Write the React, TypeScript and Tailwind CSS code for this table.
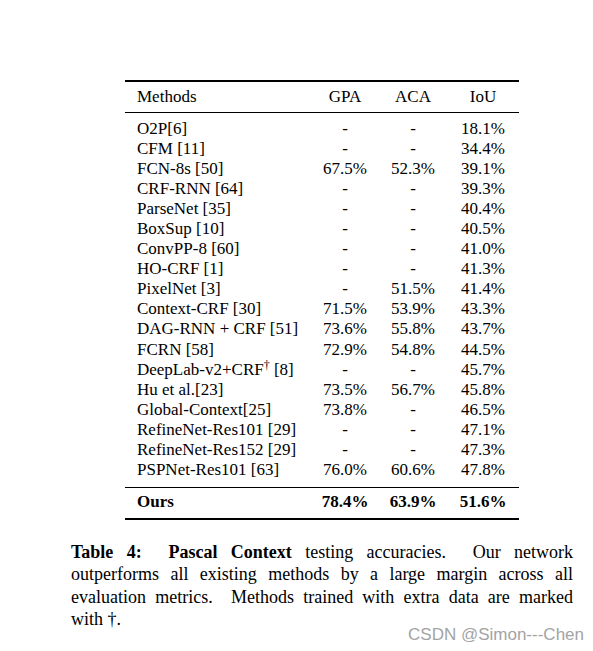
const rows: [string, string, string, string][] = [
  ['O2P[6]', '-', '-', '18.1%'],
  ['CFM [11]', '-', '-', '34.4%'],
  ['FCN-8s [50]', '67.5%', '52.3%', '39.1%'],
  ['CRF-RNN [64]', '-', '-', '39.3%'],
  ['ParseNet [35]', '-', '-', '40.4%'],
  ['BoxSup [10]', '-', '-', '40.5%'],
  ['ConvPP-8 [60]', '-', '-', '41.0%'],
  ['HO-CRF [1]', '-', '-', '41.3%'],
  ['PixelNet [3]', '-', '51.5%', '41.4%'],
  ['Context-CRF [30]', '71.5%', '53.9%', '43.3%'],
  ['DAG-RNN + CRF [51]', '73.6%', '55.8%', '43.7%'],
  ['FCRN [58]', '72.9%', '54.8%', '44.5%'],
  ['DEEPLAB', '-', '-', '45.7%'],
  ['Hu et al.[23]', '73.5%', '56.7%', '45.8%'],
  ['Global-Context[25]', '73.8%', '-', '46.5%'],
  ['RefineNet-Res101 [29]', '-', '-', '47.1%'],
  ['RefineNet-Res152 [29]', '-', '-', '47.3%'],
  ['PSPNet-Res101 [63]', '76.0%', '60.6%', '47.8%'],
];

const grid = 'grid grid-cols-[174px_68px_68px_1fr] pl-[12px]';

function Row({ cells, bold }: { cells: [string, string, string, string]; bold?: boolean }) {
  const [name, gpa, aca, iou] = cells;
  return (
    <div className={`${grid} leading-[20.1px] ${bold ? 'font-bold' : ''}`}>
      <div>
        {name === 'DEEPLAB' ? (
          <>
            DeepLab-v2+CRF<span className="relative -top-[6px] text-[12px] leading-none">†</span> [8]
          </>
        ) : (
          name
        )}
      </div>
      <div className="text-center">{gpa}</div>
      <div className="text-center">{aca}</div>
      <div className="text-center">{iou}</div>
    </div>
  );
}

export default function App() {
  return (
    <div className="relative w-[593px] h-[651px] bg-white text-black font-['Liberation_Serif',serif] pt-[80px]">
      <div className="ml-[125px] w-[394px] text-[17px]">
        <div className="h-[2px] bg-black" />
        <div className={`${grid} leading-[20px] pt-[4.5px] pb-[5.5px]`}>
          <div>Methods</div>
          <div className="text-center">GPA</div>
          <div className="text-center">ACA</div>
          <div className="text-center">IoU</div>
        </div>
        <div className="h-[1px] bg-black" />
        <div className="pt-[5.5px] pb-[6.5px]">
          {rows.map((r) => (
            <Row key={r[0]} cells={r} />
          ))}
        </div>
        <div className="h-[1px] bg-black" />
        <div className="pt-[4.5px] pb-[5.5px]">
          <Row cells={['Ours', '78.4%', '63.9%', '51.6%']} bold />
        </div>
        <div className="h-[2px] bg-black" />
      </div>

      <div className="ml-[71px] w-[502px] mt-[21px] text-[18px] leading-[22.5px]">
        <div className="text-justify [text-align-last:justify] whitespace-pre-wrap">
          <b>Table 4:</b>  <b>Pascal Context</b> testing accuracies.  Our network
        </div>
        <div className="text-justify [text-align-last:justify]">
          outperforms all existing methods by a large margin across all
        </div>
        <div className="text-justify [text-align-last:justify] whitespace-pre-wrap">
          evaluation metrics.  Methods trained with extra data are marked
        </div>
        <div>with †.</div>
      </div>

      <div className="absolute top-[624.5px] right-[9px] font-['Liberation_Sans',sans-serif] text-[17px] leading-[20px] text-[#a3a3a3]">
        CSDN @Simon---Chen
      </div>
    </div>
  );
}
